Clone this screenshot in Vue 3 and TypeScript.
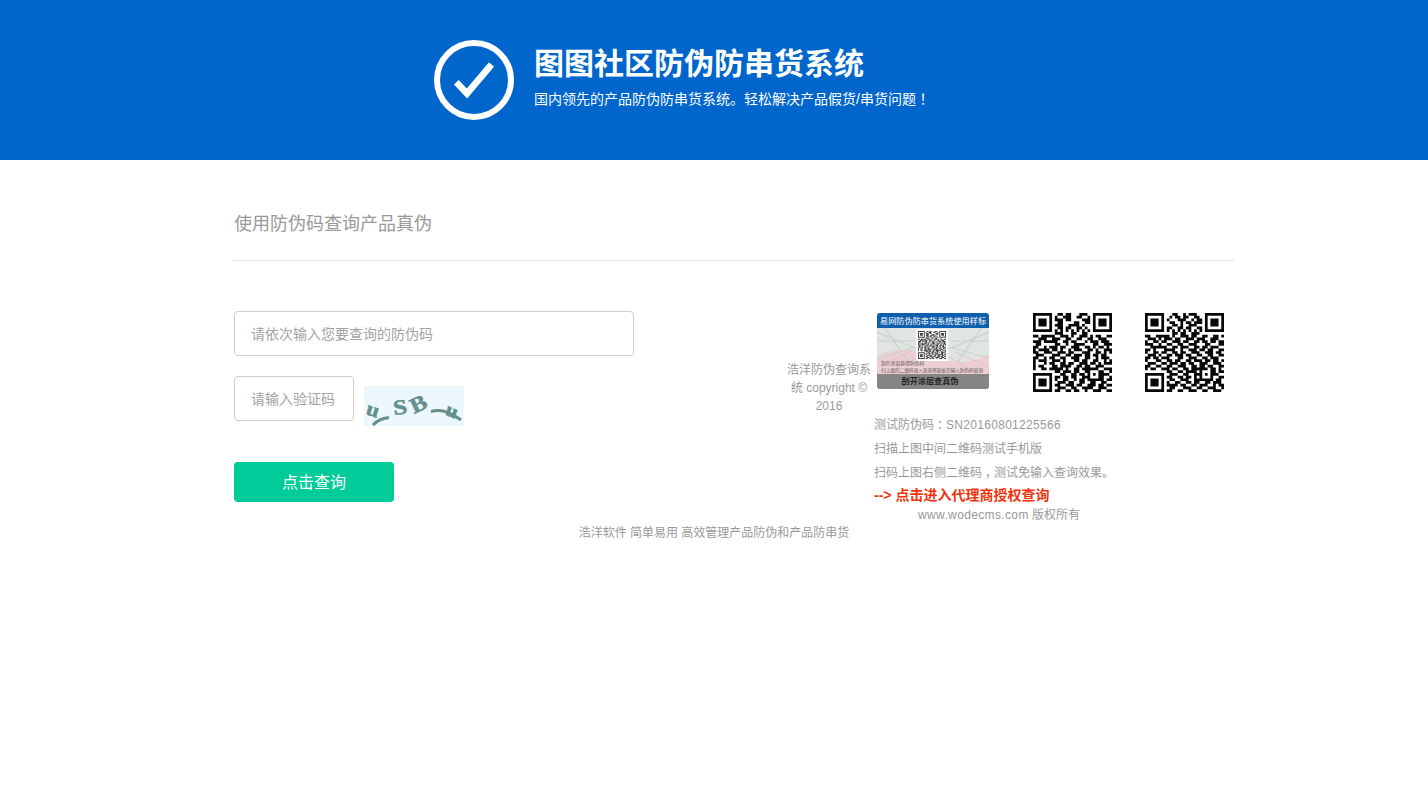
<script setup lang="ts">
import { ref } from 'vue'

const code = ref('')
const captcha = ref('')

const phoneRows: string[] = [
  '#######..##.##...###..#######',
  '#.....#.#..###..##..#.#.....#',
  '#.###.#.###.##....###.#.###.#',
  '#.###.#..##....##..##.#.###.#',
  '#.###.#.###..####.#...#.###.#',
  '#.....#..##.##..##.#..#.....#',
  '#######.#.#.#.#.#.#.#.#######',
  '........###...##..##.........',
  '##.#####..###.#..###.#.##..##',
  '..###..###..##..##..##..###..',
  '###.#####..##.##...#.###.###.',
  '.##.....##..#..####...##..###',
  '##..#.###.##..###..##.#.##.#.',
  '#.####.##.#..#.###..##.#..###',
  '##..###..###.##...###..##.#.#',
  '.###...###..##.###.##.##.##..',
  '##..#.##..##..###..##..#.###.',
  '#.###..###.#...##.##..##..#.#',
  '#...#.##..##.##..###.##.#.###',
  '#.##...##.####..##.##..###...',
  '#..##.#####.#..##.######..###',
  '........##.###.##..##...##..#',
  '#######...##..##.##.#.#.####.',
  '#.....#.##.##.##..###...##..#',
  '#.###.#.#..##..#.##.######.##',
  '#.###.#..###.##..##..##..##..',
  '#.###.#.##..###.##..###.##.##',
  '#.....#..###..##..####..###..',
  '#######.##..##.##..#..###..##',
]
const freeRows: string[] = [
  '#######...##..#.###...#######',
  '#.....#..#.##.##..##..#.....#',
  '#.###.#.#...###..#.##.#.###.#',
  '#.###.#..##..#.##.###.#.###.#',
  '#.###.#...##.#..###...#.###.#',
  '#.....#.##..##.##..##.#.....#',
  '#######.#.#.#.#.#.#.#.#######',
  '..........##.##..###.........',
  '##..#####.#..###.##..##..##.#',
  '.###.#.###.##..###.###..###..',
  '#..##.##..###.##..##.##.##.##',
  '###..#..##..##..###...##...##',
  '..######..##.###..##.##.###..',
  '##.#...####..#..###.##.##..##',
  '#..##.##..##.##..###..###.##.',
  '.###.#..##.###.##..##..##..##',
  '##.##.###...##..###..##.###..',
  '#...##..##.##..##.###.##.##.#',
  '.###..##.###.##.##..###..###.',
  '##..##..##..###..##.##.##..##',
  '#.##..###.##..##.######.##.#.',
  '........##..##.####.#...##.##',
  '#######..###..##..###.#.###..',
  '#.....#.##..##.##.#.#...#..##',
  '#.###.#..##..###..#######.##.',
  '#.###.#.#..##..##.##..##.###.',
  '#.###.#.####.##..##.###..#.##',
  '#.....#..##...###..##..###..#',
  '#######.##..##..###..##..###.',
]

function modules(rows: string[]): string {
  let d = ''
  rows.forEach((row, y) => {
    for (const run of row.matchAll(/#+/g)) {
      d += `M${run.index} ${y}h${run[0].length}v1h-${run[0].length}z`
    }
  })
  return d
}

const phonePath = modules(phoneRows)
const freePath = modules(freeRows)
</script>

<template>
  <div class="page">
    <header class="banner">
      <div class="brand">
        <svg class="logo" viewBox="0 0 80 80">
          <circle cx="40" cy="40" r="37" fill="none" stroke="#fff" stroke-width="6" />
          <path d="M22.3 42.3 33 53.5 57.5 24.5" fill="none" stroke="#fff" stroke-width="6.6" />
        </svg>
        <div class="heading">
          <h1>图图社区防伪防串货系统</h1>
          <p>国内领先的产品防伪防串货系统。轻松解决产品假货/串货问题<span class="mark">！</span></p>
        </div>
      </div>
    </header>

    <main class="content">
      <h2>使用防伪码查询产品真伪</h2>
      <div class="columns">
        <form class="query" @submit.prevent>
          <input v-model="code" class="field wide" type="text" placeholder="请依次输入您要查询的防伪码" />
          <div class="verify">
            <input v-model="captcha" class="field short" type="text" placeholder="请输入验证码" />
            <svg class="captcha" viewBox="0 0 100 40">
              <rect width="100" height="40" fill="#edf7fe" />
              <g class="letters">
                <text transform="translate(1 28) rotate(18) scale(1.15 1)" font-size="20">u</text>
                <text transform="translate(30 29) rotate(-7) scale(1.2 1)" font-size="21">S</text>
                <text transform="translate(50 28) rotate(-25) scale(1.12 1)" font-size="22">B</text>
                <text transform="translate(80 28) rotate(24) scale(1.15 1)" font-size="19">u</text>
              </g>
              <path d="M9 39Q14 33 25 31.5M67 25.5Q76 23 84 26.5T97 34" fill="none" stroke="#64908b" stroke-width="3" />
            </svg>
          </div>
          <button type="submit">点击查询</button>
        </form>

        <div class="copyright">浩洋防伪查询系<br />统 copyright ©<br />2016</div>

        <aside class="samples">
          <div class="pictures">
            <svg class="label" viewBox="0 0 112 76">
              <defs>
                <clipPath id="card"><rect width="112" height="76" rx="3" /></clipPath>
              </defs>
              <g clip-path="url(#card)">
                <rect width="112" height="76" fill="#e0e5e2" />
                <path d="M0 43Q28 30 56 43T112 41V62H0Z" fill="#edcfd2" />
                <path d="M0 19 40 36M0 28H38M0 45 36 35M8 15 32 50M112 19 72 36M112 28H74M112 45 76 35M104 15 80 50" fill="none" stroke="#c6d2cc" stroke-width="1.2" />
                <path d="M0 54 35 38M6 62 42 44M112 54 78 39M105 62 72 44" fill="none" stroke="#e3bfc4" />
                <rect width="112" height="15" fill="#105fae" />
                <rect y="61" width="112" height="15" fill="#858585" />
                <rect x="39" y="16" width="32" height="32" fill="#fafafa" />
                <g transform="translate(41 18) scale(.966)">
                  <path :d="phonePath" fill="#444" />
                </g>
              </g>
              <g class="card-text">
                <text x="56" y="10.5" font-size="8.1" text-anchor="middle" fill="#fff" textLength="106">易网防伪防串货系统使用样标</text>
                <text x="4" y="52" font-size="4.8" fill="#555">刮开涂层获得防伪码</text>
                <text x="4" y="58.7" font-size="4.8" fill="#555" textLength="102">扫上面的二维码进入查询界面依次输入防伪码查询</text>
                <text x="53" y="71.3" font-size="8.2" font-weight="700" text-anchor="middle" fill="#222" textLength="57">刮开涂层查真伪</text>
              </g>
            </svg>
            <svg class="qr phone" viewBox="0 0 29 29"><path :d="phonePath" /></svg>
            <svg class="qr free" viewBox="0 0 29 29"><path :d="freePath" /></svg>
          </div>
          <p>测试防伪码<span class="mark">：</span><span class="serial">SN20160801225566</span></p>
          <p>扫描上图中间二维码测试手机版</p>
          <p>扫码上图右侧二维码<span class="mark">，</span>测试免输入查询效果。</p>
          <a class="agent">--&gt; 点击进入代理商授权查询</a>
          <div class="owner"><span class="site">www.wodecms.com</span> 版权所有</div>
        </aside>
      </div>
    </main>
    <footer>浩洋软件 简单易用 高效管理产品防伪和产品防串货</footer>
  </div>
</template>

<style>
body {
  margin: 0;
  background: #fff;
}
</style>

<style scoped>
.page {
  font: 12px/18px "Liberation Sans", "Noto Sans CJK SC", sans-serif;
  color: #999;
}
.banner {
  height: 160px;
  background: #0066cc;
  color: #fff;
}
.brand {
  display: flex;
  gap: 20px;
  padding: 40px 0 0 434px;
}
.logo {
  width: 80px;
  height: 80px;
}
h1 {
  margin: 4px 0 0;
  font-size: 30px;
  line-height: 40px;
  font-weight: 700;
}
.heading p {
  margin: 5px 0 0;
  font-size: 14px;
  line-height: 20px;
}
.mark {
  margin: 0 .25em;
  font-feature-settings: "halt";
}
.content {
  width: 1001px;
  margin-left: 233px;
}
h2 {
  box-sizing: border-box;
  height: 101px;
  margin: 0;
  padding: 49px 0 0 1px;
  border-bottom: 1px solid #e3e3e3;
  font-size: 18px;
  line-height: 30px;
  font-weight: 400;
}
.columns {
  display: flex;
  height: 263px;
  padding: 50px 0 0 1px;
}
.query {
  width: 552px;
}
.field {
  display: block;
  box-sizing: border-box;
  height: 45px;
  padding: 0 16px;
  border: 1px solid #ccc;
  border-radius: 4px;
  background: #fff;
  font: 14px "Liberation Sans", "Noto Sans CJK SC", sans-serif;
  color: #666;
}
.field::placeholder {
  color: #a3a3a3;
}
.wide {
  width: 400px;
}
.short {
  width: 120px;
}
.verify {
  display: flex;
  gap: 10px;
  margin-top: 20px;
}
.captcha {
  width: 100px;
  height: 40px;
  margin-top: 10px;
}
.letters {
  font-family: "Liberation Serif", serif;
  font-weight: 700;
  fill: #64908b;
  stroke: #64908b;
  stroke-width: .5px;
}
button {
  display: block;
  width: 160px;
  height: 40px;
  margin-top: 36px;
  padding: 0 0 2px;
  border: 0;
  border-radius: 4px;
  background: #00cc99;
  color: #fff;
  font: 16px "Liberation Sans", "Noto Sans CJK SC", sans-serif;
}
.copyright {
  width: 86px;
  margin-top: 50px;
  text-align: center;
  white-space: nowrap;
}
.samples {
  width: 356px;
  padding-left: 2px;
}
.pictures {
  display: flex;
  height: 102px;
}
.label {
  width: 112px;
  height: 76px;
  margin: 2px 0 0 3px;
}
.card-text {
  font-family: "Noto Sans CJK SC", sans-serif;
}
.qr {
  width: 79px;
  height: 79px;
  margin-top: 2px;
  fill: #080808;
}
.phone {
  margin-left: 44px;
}
.free {
  margin-left: 33px;
}
.samples p {
  margin: 0;
  line-height: 24px;
}
.serial {
  letter-spacing: .3px;
}
.agent {
  display: block;
  color: #f1330d;
  font-size: 14px;
  font-weight: 700;
  line-height: 20px;
}
.owner {
  padding: 1px 0 0 44px;
}
.site {
  letter-spacing: .36px;
}
footer {
  height: 18px;
  margin-top: -50px;
  text-align: center;
}
</style>
